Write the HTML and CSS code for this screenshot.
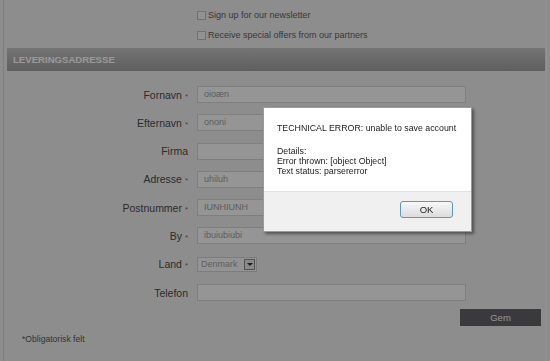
FILE: index.html
```html
<!DOCTYPE html>
<html lang="da">
<head>
  <meta charset="UTF-8" />
  <title>Leveringsadresse</title>
  <link rel="stylesheet" href="styles.css">
</head>
<body>

<div class="page">
  <div class="options">
    <label class="check"><span class="box"></span>Sign up for our newsletter</label>
    <label class="check"><span class="box"></span>Receive special offers from our partners</label>
  </div>

  <h2 class="section">LEVERINGSADRESSE</h2>

  <form class="address">
    <div class="row">
      <label>Fornavn <span class="req">*</span></label>
      <div class="field">oioæn</div>
    </div>
    <div class="row">
      <label>Efternavn <span class="req">*</span></label>
      <div class="field">ononi</div>
    </div>
    <div class="row">
      <label>Firma</label>
      <div class="field"></div>
    </div>
    <div class="row">
      <label>Adresse <span class="req">*</span></label>
      <div class="field">uhiluh</div>
    </div>
    <div class="row">
      <label>Postnummer <span class="req">*</span></label>
      <div class="field">IUNHIUNH</div>
    </div>
    <div class="row">
      <label>By <span class="req">*</span></label>
      <div class="field">ibuiubiubi</div>
    </div>
    <div class="row">
      <label>Land <span class="req">*</span></label>
      <div class="select">Denmark<span class="arrow"></span></div>
    </div>
    <div class="row">
      <label>Telefon</label>
      <div class="field"></div>
    </div>

    <div class="actions">
      <div class="save">Gem</div>
    </div>
  </form>

  <p class="note">*Obligatorisk felt</p>
</div>

<div class="overlay"></div>

<div class="dialog">
  <div class="dialog-body">
    <p class="title">TECHNICAL ERROR: unable to save account</p>
    <p>Details:<br>Error thrown: [object Object]<br>Text status: parsererror</p>
  </div>
  <div class="dialog-foot">
    <div class="ok">OK</div>
  </div>
</div>

</body>
</html>
```

FILE: styles.css
```css
body {
  font-family: "Liberation Sans", Arial, sans-serif;
  background-color: #ececec;
  margin: 0;
  padding: 0;
  overflow: hidden;
}
.page {
  margin-left: 3px;
  width: 538px;
  height: 361px;
  border-left: 1px solid #d2d2d2;
  border-right: 1px solid #f6f6f6;
  padding-left: 3px;
  padding-right: 1px;
}
.options {
  padding: 10px 0 0 190px;
  height: 48px;
  box-sizing: border-box;
}
.check {
  display: flex;
  align-items: center;
  height: 10px;
  margin-bottom: 10px;
  font-size: 9px;
  color: #5e5e5e;
}
.box {
  width: 9px;
  height: 9px;
  border: 1px solid #bdbdbd;
  background: #f4f4f4;
  margin-right: 2px;
  box-sizing: border-box;
}
.section {
  margin: 0;
  height: 23px;
  line-height: 23px;
  padding-left: 6px;
  font-size: 9.6px;
  color: #ffffff;
  background: linear-gradient(#c2c2c2, #9e9e9e);
}
.address {
  padding-top: 15px;
}
.row {
  display: flex;
  align-items: center;
  height: 17px;
  margin-bottom: 11.3px;
}
.row label {
  width: 190px;
  flex-shrink: 0;
  padding-right: 9px;
  box-sizing: border-box;
  text-align: right;
  font-size: 10.5px;
  color: #4a4a4a;
}
.req {
  font-size: 8px;
  color: #8a6a6a;
}
.field {
  width: 269px;
  height: 17px;
  box-sizing: border-box;
  border: 1px solid #d4d4d4;
  background: #f8f8f8;
  font-size: 9px;
  line-height: 15px;
  padding-left: 6px;
  color: #9c9c9c;
}
.select {
  display: flex;
  align-items: center;
  width: 60px;
  height: 15px;
  box-sizing: border-box;
  border: 1px solid #cfcfcf;
  background: #f6f6f6;
  font-size: 9px;
  padding-left: 3px;
  color: #a0a0a0;
}
.arrow {
  margin-left: auto;
  margin-right: 1px;
  width: 11px;
  height: 11px;
  box-sizing: border-box;
  border: 1px solid #8c8c8c;
  background: #e6e6e6;
  position: relative;
}
.arrow::after {
  content: "";
  position: absolute;
  left: 2px;
  top: 3px;
  border-left: 3px solid transparent;
  border-right: 3px solid transparent;
  border-top: 3px solid #333;
}
.actions {
  display: flex;
  justify-content: flex-end;
  padding-right: 4px;
  margin-top: -3px;
}
.save {
  width: 81px;
  height: 17px;
  line-height: 17px;
  text-align: center;
  background: #626264;
  color: #f2f2f2;
  font-size: 9.5px;
}
.note {
  margin: 8px 0 0 15px;
  font-size: 8.6px;
  color: #555;
}
.overlay {
  position: fixed;
  left: 0;
  top: 0;
  right: 0;
  bottom: 0;
  background: rgba(0, 0, 0, 0.4);
}
.dialog {
  position: fixed;
  left: 263px;
  top: 107px;
  width: 209px;
  height: 125px;
  box-sizing: border-box;
  border: 1px solid #9a9a9a;
  background: #fff;
  box-shadow: 2px 2px 3px rgba(0, 0, 0, 0.45);
  display: flex;
  flex-direction: column;
  font-size: 8.8px;
  color: #222;
}
.dialog-body {
  flex: 1;
  padding: 15px 0 0 13px;
}
.dialog-body p {
  margin: 0;
  line-height: 10px;
}
.dialog-body .title {
  margin-bottom: 13px;
}
.dialog-foot {
  height: 40px;
  box-sizing: border-box;
  border-top: 1px solid #e2e2e2;
  background: #f0f0f0;
  display: flex;
  justify-content: flex-end;
  align-items: flex-start;
  padding: 9px 18px 0 0;
}
.ok {
  width: 53px;
  height: 17px;
  box-sizing: border-box;
  border: 1px solid #5a9ac0;
  border-radius: 3px;
  background: linear-gradient(#f8f8f8, #dcdcdc);
  text-align: center;
  line-height: 15px;
  font-size: 9.5px;
}
```
